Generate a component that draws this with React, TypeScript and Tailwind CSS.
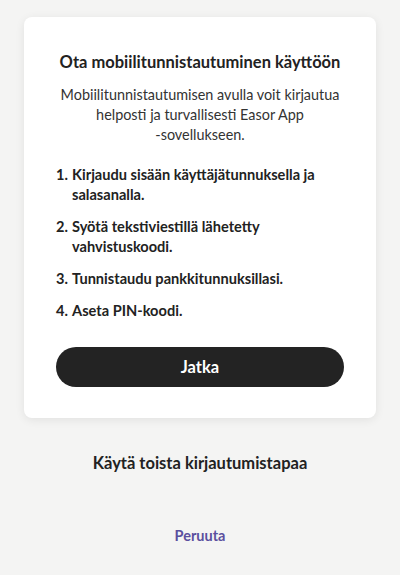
import React from "react";

export default function App() {
  const items = [
    "Kirjaudu sisään käyttäjätunnuksella ja salasanalla.",
    "Syötä tekstiviestillä lähetetty vahvistuskoodi.",
    "Tunnistaudu pankkitunnuksillasi.",
    "Aseta PIN-koodi.",
  ];
  return (
    <div
      className="w-[400px] h-[575px] bg-[#f4f4f3] flex flex-col items-center pt-[17px]"
      style={{ fontFamily: "Lato, 'Noto Sans', sans-serif" }}
    >
      <div className="w-[352px] bg-white rounded-[8px] shadow-[0_2px_10px_rgba(0,0,0,0.08)] px-[32px] pt-[34px] pb-[31px] flex flex-col">
        <h1 className="text-center text-[16.5px] leading-[22px] font-bold text-[#222]">
          Ota mobiilitunnistautuminen käyttöön
        </h1>
        <p className="mt-[12px] text-center text-[14.4px] leading-[20px] text-[#333]">
          Mobiilitunnistautumisen avulla voit kirjautua
          <br />
          helposti ja turvallisesti Easor App
          <br />
          -sovellukseen.
        </p>
        <ol className="mt-[20px] flex flex-col gap-[12px]">
          {items.map((t, i) => (
            <li key={i} className="flex text-[14.6px] leading-[20px] font-bold text-[#222]">
              <span className="w-[16px] shrink-0">{i + 1}.</span>
              <span className="pr-[24px]">{t}</span>
            </li>
          ))}
        </ol>
        <button className="mt-[26px] h-[40px] w-full rounded-full bg-[#232323] text-white text-[16.5px] font-bold">
          Jatka
        </button>
      </div>
      <div className="mt-[34px] text-[16.5px] leading-[22px] font-bold text-[#222]">
        Käytä toista kirjautumistapaa
      </div>
      <div className="mt-[52px] text-[14.5px] leading-[20px] font-bold text-[#5a4f9e]">
        Peruuta
      </div>
    </div>
  );
}
